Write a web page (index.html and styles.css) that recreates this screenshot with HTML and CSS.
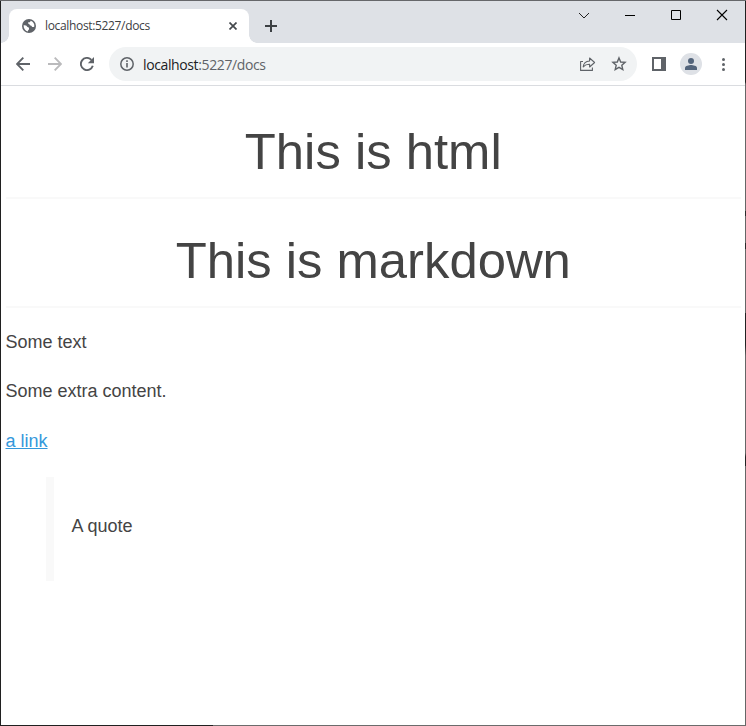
FILE: index.html
```html
<!DOCTYPE html>
<html lang="en">
<head>
<meta charset="utf-8">
<title>localhost:5227/docs</title>
<link rel="stylesheet" href="styles.css">
</head>
<body>
<div class="window">
  <header class="titlebar">
    <div class="tab">
      <svg class="globe" width="14" height="14" viewBox="0 0 14 14"><circle cx="7" cy="7" r="7" fill="#5f6368"/><path d="M1.6 6.2 C3.2 6.3 4.6 6.2 5 7.4 C5.3 8.4 7 7.7 7 9.2 V10.4 C6.4 10.6 6 11.3 5.8 12.4 C3.2 11.8 1.5 9.5 1.6 6.2Z M8.4 1.8 C8.6 3 7.8 3.4 6.8 3.3 C5.7 3.2 5.7 4.6 6.7 4.8 C7.8 5 7.4 6.4 8.6 6.4 C10 6.4 9.6 7.8 10.4 8 C11.4 8.2 11.8 7.6 12.3 7.8 C12.8 4.8 11.2 2.6 8.4 1.8Z" fill="#fff"/></svg>
      <span class="tab-title">localhost:5227/docs</span>
      <svg class="tab-close" width="8" height="8" viewBox="0 0 8 8"><path d="M.5 .5 7.5 7.5M7.5 .5 .5 7.5" stroke="#45494d" stroke-width="1.7"/></svg>
    </div>
    <svg class="new-tab" width="12" height="12" viewBox="0 0 12 12"><path d="M6 0V12M0 6H12" stroke="#3c4043" stroke-width="2"/></svg>
    <div class="controls">
      <svg width="46" height="29" viewBox="0 0 46 29"><path d="M18 12 23 17 28 12" fill="none" stroke="#222" stroke-width="1"/></svg>
      <svg width="46" height="29" viewBox="0 0 46 29"><path d="M18 14.5H28" stroke="#000"/></svg>
      <svg width="46" height="29" viewBox="0 0 46 29"><path d="M18.5 9.5H27.5V18.5H18.5Z" fill="none" stroke="#000"/></svg>
      <svg width="46" height="29" viewBox="0 0 46 29"><path d="M18 9 28 19M28 9 18 19" stroke="#000" stroke-width="1.1"/></svg>
    </div>
  </header>
  <nav class="toolbar">
    <svg class="back" width="14" height="14" viewBox="0 0 14 14"><path d="M14 7H1.5M7.3 .7 1 7 7.3 13.3" fill="none" stroke="#5f6368" stroke-width="1.9"/></svg>
    <svg class="forward" width="14" height="14" viewBox="0 0 14 14"><path d="M0 7H12.5M6.7 .7 13 7 6.7 13.3" fill="none" stroke="#bababc" stroke-width="1.9"/></svg>
    <svg class="reload" width="14" height="14" viewBox="0 0 14 14"><path d="M12.8 8.8A6.1 6.1 0 1 1 11.4 2.8" fill="none" stroke="#5f6368" stroke-width="1.9"/><path d="M14 0V6.2H7.8Z" fill="#5f6368"/></svg>
    <div class="address">
      <svg class="info" width="14" height="14" viewBox="0 0 14 14"><circle cx="7" cy="7" r="6.2" fill="none" stroke="#5f6368" stroke-width="1.5"/><path d="M7 3.2V4.9M7 6V10.6" stroke="#5f6368" stroke-width="1.6"/></svg>
      <span class="url"><b>localhost</b>:5227/docs</span>
      <svg class="share" width="16" height="14" viewBox="0 0 16 14"><path d="M3 4.5H.6V13.4H12.4V10.5M3.2 9.8C3.6 6.1 6 4.2 9.6 4V1L14.6 5.5 9.6 10V7.2C6.8 7.1 4.8 8 3.2 9.8Z" fill="none" stroke="#5f6368" stroke-width="1.1" stroke-linejoin="round"/></svg>
      <svg class="star" width="16" height="16" viewBox="0 0 16 16"><path d="M8 1.9 9.7 6 14.1 6.4 10.8 9.3 11.8 13.6 8 11.3 4.2 13.6 5.2 9.3 1.9 6.4 6.3 6Z" fill="none" stroke="#5f6368" stroke-width="1.4"/></svg>
    </div>
    <svg class="panel" width="14" height="14" viewBox="0 0 14 14"><path d="M0 0H14V14H0Z M2 2V12H9V2Z" fill="#5f6368" fill-rule="evenodd"/></svg>
    <svg class="profile" width="22" height="22" viewBox="0 0 22 22"><circle cx="11" cy="11" r="11" fill="#dee1e6"/><circle cx="11" cy="8" r="3" fill="#53647b"/><path d="M5 17V15C5 13 9 12.1 11 12.1S17 13 17 15V17Z" fill="#53647b"/></svg>
    <svg class="more" width="4" height="14" viewBox="0 0 4 14"><g fill="#5f6368"><circle cx="2.5" cy="2.5" r="1.5"/><circle cx="2.5" cy="7.5" r="1.5"/><circle cx="2.5" cy="12.4" r="1.5"/></g></svg>
  </nav>
  <main>
    <h1>This is html</h1>
    <h1>This is markdown</h1>
    <p>Some text</p>
    <p>Some extra content.</p>
    <p><a href="#">a link</a></p>
    <blockquote><p>A quote</p></blockquote>
  </main>
</div>
</body>
</html>
```
FILE: styles.css
```css
* { box-sizing: border-box; }
body { margin: 0; background: #fff; overflow: hidden; }
svg { display: block; flex: none; }
.window {
  width: 746px;
  height: 726px;
  padding: 1px;
  background:
    linear-gradient(#66676a, #66676a) 0 0 / 746px 1px no-repeat,
    linear-gradient(#202020, #202020) 0 0 / 1px 726px no-repeat,
    linear-gradient(90deg, #202020 213px, #6b6b6b 213px) 0 725px / 746px 1px no-repeat,
    linear-gradient(#202020 82px, #666 84px, #666 211px, #2a2a2a 211px, #2a2a2a 216px, #666 216px, #666 243px, #2a2a2a 243px, #2a2a2a 249px, #666 249px, #666 313px, #222 313px, #222 345px, #666 356px, #666 453px, #222 457px, #222 466px, #666 466px) 745px 0 / 1px 726px no-repeat,
    #fff;
}
.titlebar {
  display: flex;
  height: 42px;
  padding: 8px 0 0 8px;
  background: #dee1e6;
}
.tab {
  position: relative;
  display: flex;
  align-items: center;
  width: 240px;
  height: 34px;
  padding: 0 12px 0 13px;
  border-radius: 8px 8px 0 0;
  background: #fff;
}
.tab::before, .tab::after {
  content: "";
  position: absolute;
  bottom: 0;
  width: 8px;
  height: 8px;
}
.tab::before { left: -8px; background: radial-gradient(circle at 0 0, transparent 7.5px, #fff 8px); }
.tab::after { right: -8px; background: radial-gradient(circle at 100% 0, transparent 7.5px, #fff 8px); }
.tab-title {
  flex: 1;
  margin: -2px 0 0 9px;
  font: 12px "Open Sans", sans-serif;
  letter-spacing: -0.34px;
  color: #3c4043;
}
.new-tab { margin: 11px 0 0 16px; }
.controls { display: flex; margin: -8px 0 0 auto; }
.toolbar {
  display: flex;
  align-items: center;
  height: 43px;
  padding: 0 20px 0 15px;
  border-bottom: 1px solid #dadce0;
  background: #fff;
}
.forward { margin-left: 18px; }
.reload { margin-left: 18px; }
.address {
  display: flex;
  align-items: center;
  width: 528px;
  height: 34px;
  margin-left: 15px;
  padding: 0 10px 0 11px;
  border-radius: 17px;
  background: #f1f3f4;
}
.url {
  flex: 1;
  margin-left: 9px;
  font: 14px "Open Sans", sans-serif;
  letter-spacing: -0.38px;
  color: #5f6368;
}
.url b { font-weight: 400; color: #202124; }
.star { margin-left: 15px; }
.panel { margin-left: 15px; }
.profile { margin-left: 14px; }
.more { margin-left: auto; }
main {
  padding: 14px 4px 0 4.5px;
  font: 18px/33px "Liberation Sans", Arial, sans-serif;
  color: #444;
}
h1 {
  height: 99px;
  margin: 0 0 10px;
  padding-top: 22px;
  border-bottom: 2px solid #f9f9f9;
  font-size: 50.8px;
  font-weight: 400;
  line-height: 60px;
  text-align: center;
}
main p { margin: 0 0 16.5px; }
h1 + p { padding-top: 7.5px; }
a { color: #3498db; }
blockquote {
  height: 104px;
  margin: 19.5px 40px 0 40.5px;
  padding: 33px 17.5px;
  border-left: 8px solid #f9f9f9;
}
```
